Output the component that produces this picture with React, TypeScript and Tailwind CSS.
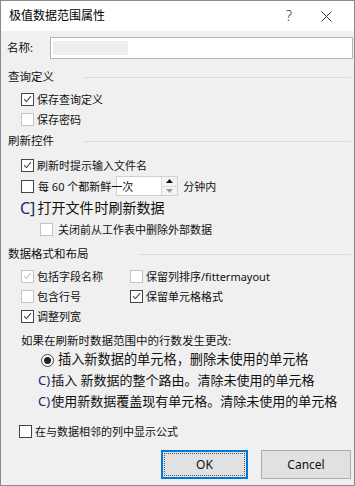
import React from "react"

const font = { fontFamily: '"Noto Sans", "Noto Sans CJK SC", sans-serif' }

function Box({ checked = false, dim = false }: { checked?: boolean; dim?: boolean }) {
  return (
    <span
      className={`flex h-[13px] w-[13px] shrink-0 items-center justify-center border bg-white ${
        dim ? "border-[#c4c4c4]" : "border-[#444]"
      }`}
    >
      {checked && (
        <svg width="9" height="8" viewBox="0 0 9 8">
          <path d="M1 4.2 L3.4 6.6 L8 1.2" fill="none" stroke={dim ? "#c8c8c8" : "#555"} strokeWidth="1.2" />
        </svg>
      )}
    </span>
  )
}

function Check({ label, checked, dim, indent = "pl-[20px]" }: { label: string; checked?: boolean; dim?: boolean; indent?: string }) {
  return (
    <div className={`flex h-[20px] items-center gap-[3px] ${indent}`}>
      <Box checked={checked} dim={dim} />
      <span className="text-[11px] leading-none text-[#111]">{label}</span>
    </div>
  )
}

function Section({ title, lineFrom }: { title: string; lineFrom: string }) {
  return (
    <div className="relative flex h-[18px] items-center pl-[7px]">
      <span className="text-[11.5px] leading-none text-[#111]">{title}</span>
      <div className={`absolute right-[3px] top-[9px] h-px bg-[#dcdcdc] ${lineFrom}`} />
    </div>
  )
}

export default function App() {
  return (
    <div className="h-[486px] w-[355px] overflow-hidden border border-[#8a8a8a] bg-[#f0f0f0]" style={font}>
      {/* Title bar */}
      <div className="flex h-[30px] items-center bg-white pl-[8px]">
        <span className="flex-1 text-[12px] leading-none text-[#000]">极值数据范围属性</span>
        <span className="w-[20px] text-center text-[14px] font-light leading-none text-[#333]">?</span>
        <span className="flex w-[55px] items-center justify-center">
          <svg width="11" height="11" viewBox="0 0 11 11">
            <path d="M0.5 0.5 L10.5 10.5 M10.5 0.5 L0.5 10.5" stroke="#333" strokeWidth="1" />
          </svg>
        </span>
      </div>

      {/* Name */}
      <div className="mt-[6px] flex h-[22px] items-center pl-[6px] pr-[1px]">
        <span className="w-[43px] text-[11.5px] leading-none text-[#111]">名称:</span>
        <div className="flex h-[22px] flex-1 items-center border border-[#b4b4b4] bg-white pl-[2px]">
          <div className="h-[14px] w-[75px] bg-[#eeeeee]" />
        </div>
      </div>

      <div className="mt-[9px]">
        <Section title="查询定义" lineFrom="left-[82px]" />
      </div>
      <div className="mt-[3px]">
        <Check label="保存查询定义" checked />
        <Check label="保存密码" dim />
      </div>

      <div className="mt-[3px]">
        <Section title="刷新控件" lineFrom="left-[82px]" />
      </div>
      <div className="mt-[5px]">
        <Check label="刷新时提示输入文件名" checked />
        <div className="flex h-[22px] items-center pl-[20px]">
          <Box />
          <span className="relative z-10 ml-[4px] text-[11px] leading-none text-[#111]">每 60 个都新鲜一次</span>
          <div className="ml-[-17px] flex h-[20px] w-[62px] items-center border border-[#d0d0d0] bg-white">
            <div className="flex-1" />
            <div className="flex h-full w-[16px] flex-col border-l border-[#d8d8d8] bg-[#f4f4f4]">
              <div className="flex flex-1 items-center justify-center border-b border-[#d8d8d8]">
                <svg width="7" height="4" viewBox="0 0 7 4"><path d="M0 4 L3.5 0 L7 4 Z" fill="#111" /></svg>
              </div>
              <div className="flex flex-1 items-center justify-center">
                <svg width="7" height="4" viewBox="0 0 7 4"><path d="M0 0 L3.5 4 L7 0 Z" fill="#999" /></svg>
              </div>
            </div>
          </div>
          <span className="ml-[5px] text-[11px] leading-none text-[#111]">分钟内</span>
        </div>
        <div className="flex h-[22px] items-center pl-[19px]">
          <span className="text-[16px] leading-none text-[#1a2a6a]">C]</span>
          <span className="ml-[2px] text-[14px] leading-none text-[#111]">打开文件</span>
          <span className="ml-[1px] text-[14px] leading-none text-[#111]">时刷新数据</span>
        </div>
        <Check label="关闭前从工作表中删除外部数据" dim indent="pl-[39px] !gap-[5px]" />
      </div>

      <div className="mt-[6px]">
        <Section title="数据格式和布局" lineFrom="left-[137px]" />
      </div>
      <div className="mt-[3px] grid grid-cols-[129px_1fr]">
        <Check label="包括字段名称" checked dim />
        <Check label="保留列排序/fittermayout" dim indent="pl-0" />
        <Check label="包含行号" dim />
        <Check label="保留单元格格式" checked indent="pl-0" />
        <Check label="调整列宽" checked />
      </div>

      <div className="mt-[6px] flex h-[18px] items-center pl-[20px]">
        <span className="text-[11.5px] leading-none text-[#111]">如果在刷新时数据范围中的行数发生更改:</span>
      </div>
      <div className="flex h-[20px] items-center pl-[40px]">
        <span className="flex h-[13px] w-[13px] items-center justify-center rounded-full border border-[#444] bg-white">
          <span className="h-[7px] w-[7px] rounded-full bg-[#222]" />
        </span>
        <span className="ml-[4px] text-[13.2px] leading-none text-[#111]">插入新数据的单元格，删除未使用的单元格</span>
      </div>
      <div className="flex h-[21px] items-center pl-[37px]">
        <span className="text-[13px] leading-none text-[#1a2a6a]">C)</span>
        <span className="ml-[1px] text-[13px] leading-none text-[#111]">插入 新数据的整个路由。清除未使用的单元格</span>
      </div>
      <div className="flex h-[21px] items-center pl-[37px]">
        <span className="text-[13px] leading-none text-[#1a2a6a]">C)</span>
        <span className="ml-[1px] text-[13px] leading-none text-[#111]">使用新数据覆盖现有单元格。清除未使用的单元格</span>
      </div>

      <div className="mt-[9px]">
        <Check label="在与数据相邻的列中显示公式" indent="pl-[18px]" />
      </div>

      <div className="mt-[9px] flex justify-end gap-[13px] pr-[3px]">
        <button className="flex h-[29px] w-[87px] items-center justify-center border-2 border-[#0078d7] bg-[#e1e1e1] p-[1px]">
          <span className="flex h-full w-full items-center justify-center border border-dotted border-[#555] text-[12px] text-[#111]">
            OK
          </span>
        </button>
        <button className="flex h-[29px] w-[90px] items-center justify-center border border-[#adadad] bg-[#e1e1e1] text-[12px] text-[#111]">
          Cancel
        </button>
      </div>
    </div>
  )
}
